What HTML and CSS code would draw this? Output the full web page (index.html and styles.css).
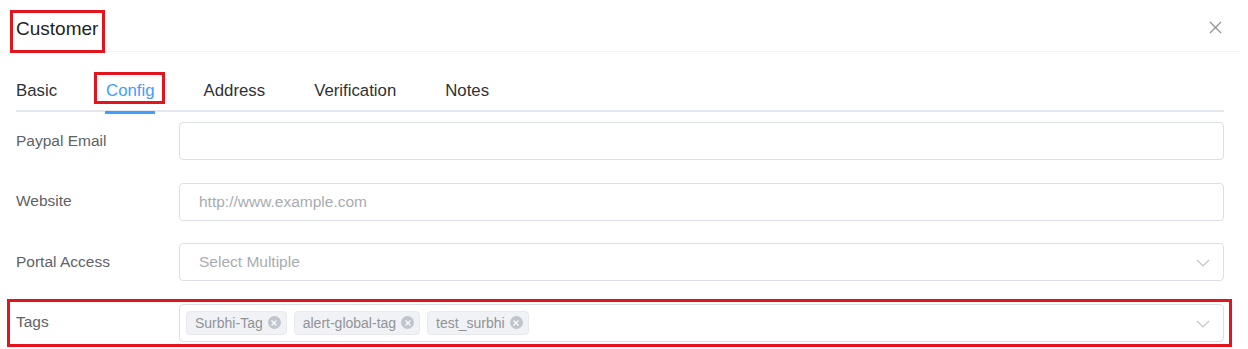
FILE: index.html
```html
<!DOCTYPE html>
<html>
<head>
<meta charset="utf-8">
<link rel="stylesheet" href="styles.css">
</head>
<body>
<div class="dialog">
  <div class="header">
    <span class="title annot">Customer</span>
    <button class="close" aria-label="Close">
      <svg width="13" height="13" viewBox="0 0 13 13"><path d="M1 1 L12 12 M12 1 L1 12" stroke="#909399" stroke-width="1.3" fill="none"/></svg>
    </button>
  </div>
  <div class="body">
    <div class="tabs">
      <div class="tab">Basic</div>
      <div class="tab active annot-tab">Config</div>
      <div class="tab">Address</div>
      <div class="tab">Verification</div>
      <div class="tab">Notes</div>
    </div>
    <div class="form">
      <div class="row">
        <label class="label">Paypal Email</label>
        <div class="input"></div>
      </div>
      <div class="row">
        <label class="label">Website</label>
        <div class="input"><span class="ph">http://www.example.com</span></div>
      </div>
      <div class="row">
        <label class="label">Portal Access</label>
        <div class="input select"><span class="ph">Select Multiple</span>
          <svg class="chev" width="14" height="8" viewBox="0 0 14 8"><path d="M1 1 L7 7 L13 1" stroke="#c0c4cc" stroke-width="1.2" fill="none"/></svg>
        </div>
      </div>
      <div class="row annot-row">
        <label class="label">Tags</label>
        <div class="input select tags">
          <span class="chip">Surbhi-Tag<i class="x"><svg width="8" height="8" viewBox="0 0 8 8"><path d="M1.5 1.5 L6.5 6.5 M6.5 1.5 L1.5 6.5" stroke="#fff" stroke-width="1.1"/></svg></i></span>
          <span class="chip">alert-global-tag<i class="x"><svg width="8" height="8" viewBox="0 0 8 8"><path d="M1.5 1.5 L6.5 6.5 M6.5 1.5 L1.5 6.5" stroke="#fff" stroke-width="1.1"/></svg></i></span>
          <span class="chip">test_surbhi<i class="x"><svg width="8" height="8" viewBox="0 0 8 8"><path d="M1.5 1.5 L6.5 6.5 M6.5 1.5 L1.5 6.5" stroke="#fff" stroke-width="1.1"/></svg></i></span>
          <svg class="chev" width="14" height="8" viewBox="0 0 14 8"><path d="M1 1 L7 7 L13 1" stroke="#c0c4cc" stroke-width="1.2" fill="none"/></svg>
        </div>
      </div>
    </div>
  </div>
</div>
</body>
</html>
```

FILE: styles.css
```css
* { box-sizing: border-box; }
html, body { margin: 0; padding: 0; background: #fff; }
body {
  font-family: "Liberation Sans", Arial, sans-serif;
  color: #303133;
  width: 1248px;
  height: 349px;
  overflow: hidden;
}
.dialog { width: 1240px; }
.header {
  height: 52px;
  padding: 17px 16px 0 16px;
  border-bottom: 1px solid #f0f2f5;
  display: flex;
  justify-content: space-between;
  align-items: flex-start;
}
.title {
  font-size: 19px;
  line-height: 24px;
  color: #1f1f1f;
  position: relative;
}
.annot::after {
  content: "";
  position: absolute;
  top: -7px; bottom: -12px; left: -6px; right: -7px;
  border: 3px solid #e4141e;
}
.close {
  border: 0; background: none; padding: 0; margin: 4px 2px 0 0;
  width: 13px; height: 13px; display: block; cursor: pointer;
}
.close svg { display: block; }
.body { padding: 0 16px; }
.tabs {
  margin-top: 20px;
  display: flex;
  gap: 49px;
  height: 40px;
  border-bottom: 2px solid #e4e7ed;
}
.tab {
  font-size: 16.8px;
  line-height: 37px;
  color: #303133;
  position: relative;
  height: 40px;
}
.tab.active { color: #409eff; }
.tab.active::before {
  content: "";
  position: absolute;
  left: -1px; right: 0; bottom: -2px;
  height: 3px;
  background: #409eff;
}
.annot-tab::after {
  content: "";
  position: absolute;
  top: 0; bottom: 8px; left: -12px; right: -10px;
  border: 3px solid #e4141e;
}
.form { padding-top: 10px; display: flex; flex-direction: column; gap: 22.67px; }
.row { display: flex; align-items: center; height: 38px; position: relative; }
.label {
  width: 163px;
  flex: none;
  font-size: 15.5px;
  line-height: 20px;
  margin-top: -1px;
  color: #606266;
}
.input {
  flex: 1;
  height: 38px;
  border: 1px solid #dcdfe6;
  border-radius: 4px;
  padding: 0 40px 0 19px;
  display: flex;
  align-items: center;
  position: relative;
}
.ph { font-size: 15.5px; color: #a8abb2; }
.chev { position: absolute; right: 13px; top: 15px; }
.tags { padding-left: 6px; gap: 7px; }
.chip {
  display: inline-flex;
  align-items: center;
  height: 24px;
  padding: 0 5px 0 8px;
  background: #f0f2f5;
  border: 1px solid #e9e9eb;
  border-radius: 4px;
  font-size: 14px;
  color: #909399;
  gap: 5px;
}
.x {
  width: 13px; height: 13px;
  border-radius: 50%;
  background: #c0c4cc;
  display: inline-flex;
  align-items: center;
  justify-content: center;
}
.x svg { display: block; }
.annot-row::after {
  content: "";
  position: absolute;
  top: -5px; bottom: -5px; left: -9px; right: -8px;
  border: 3px solid #e4141e;
}
```
